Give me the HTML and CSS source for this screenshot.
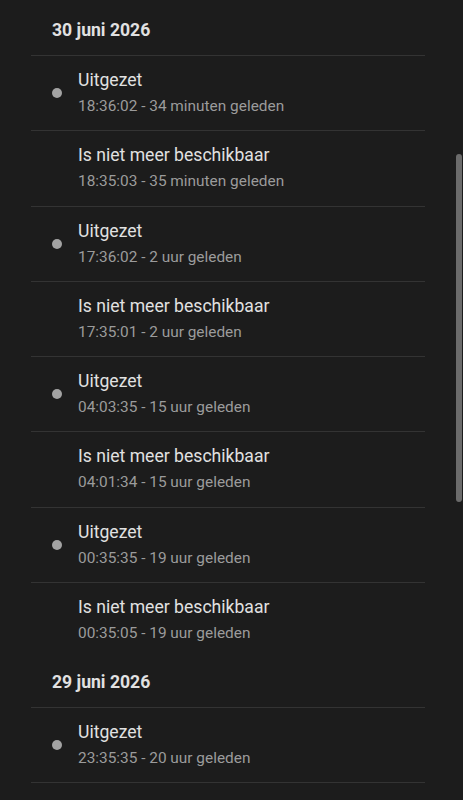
FILE: index.html
```html
<!DOCTYPE html>
<html lang="nl">
<head>
    <meta charset="UTF-8">
    <meta name="viewport" content="width=device-width, initial-scale=1.0">
    <title>Logboek</title>
    <link rel="stylesheet" href="styles.css">
</head>
<body>
    <div class="logbook">
        <div class="day">30 juni 2026</div>
        <div class="entry"><span class="dot"></span><div class="text"><div class="title">Uitgezet</div><div class="meta">18:36:02 - 34 minuten geleden</div></div></div>
        <div class="entry"><span class="nodot"></span><div class="text"><div class="title">Is niet meer beschikbaar</div><div class="meta">18:35:03 - 35 minuten geleden</div></div></div>
        <div class="entry"><span class="dot"></span><div class="text"><div class="title">Uitgezet</div><div class="meta">17:36:02 - 2 uur geleden</div></div></div>
        <div class="entry"><span class="nodot"></span><div class="text"><div class="title">Is niet meer beschikbaar</div><div class="meta">17:35:01 - 2 uur geleden</div></div></div>
        <div class="entry"><span class="dot"></span><div class="text"><div class="title">Uitgezet</div><div class="meta">04:03:35 - 15 uur geleden</div></div></div>
        <div class="entry"><span class="nodot"></span><div class="text"><div class="title">Is niet meer beschikbaar</div><div class="meta">04:01:34 - 15 uur geleden</div></div></div>
        <div class="entry"><span class="dot"></span><div class="text"><div class="title">Uitgezet</div><div class="meta">00:35:35 - 19 uur geleden</div></div></div>
        <div class="entry"><span class="nodot"></span><div class="text"><div class="title">Is niet meer beschikbaar</div><div class="meta">00:35:05 - 19 uur geleden</div></div></div>
        <div class="day">29 juni 2026</div>
        <div class="entry"><span class="dot"></span><div class="text"><div class="title">Uitgezet</div><div class="meta">23:35:35 - 20 uur geleden</div></div></div>
        <div class="entry"><span class="nodot"></span><div class="text"><div class="title">Is niet meer beschikbaar</div><div class="meta">23:35:05 - 20 uur geleden</div></div></div>
    </div>
    <div class="scrollbar"></div>
</body>
</html>
```
FILE: styles.css
```css
html, body {margin: 0; height: 100%; overflow: hidden; background: #1c1c1c;}
body {font-family: Roboto, "Noto Sans", sans-serif; color: #e1e1e1; position: relative;}
.logbook {padding-top: 5px;}
.day {height: 50px; line-height: 50px; padding-left: 52px; font-size: 17.6px; font-weight: 700; color: #e1e1e1;}
.entry {display: flex; align-items: center; margin: 0 38px 0 31px; height: 74.28px; border-top: 1px solid #333333; padding-left: 21px;}
.dot, .nodot {width: 10px; height: 10px; border-radius: 50%; flex: none; margin-right: 16px;}
.dot {background: #a3a3a3;}
.text {display: flex; flex-direction: column;}
.title {font-size: 17.6px; line-height: 24px;}
.meta {font-size: 15.4px; line-height: 24px; margin-top: 2px; color: #9b9b9b;}
.scrollbar {position: absolute; right: 1px; top: 154px; width: 6px; height: 348px; border-radius: 3px; background: #6b6b6b;}
```
